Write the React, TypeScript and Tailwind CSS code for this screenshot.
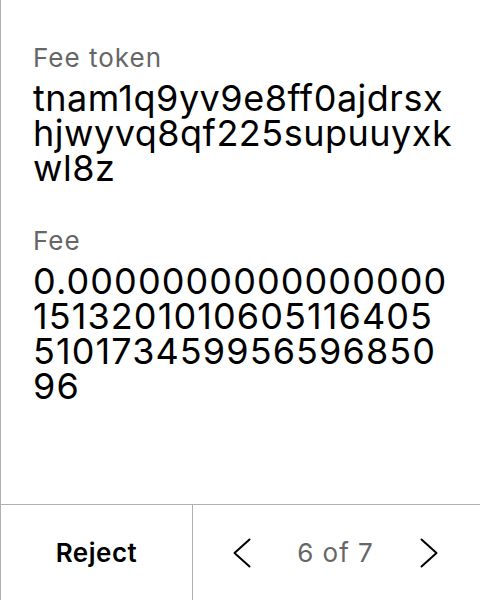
import React from 'react'

const font = { fontFamily: 'Inter, "Noto Sans", sans-serif' }

function Chevron({ dir }: { dir: 'left' | 'right' }) {
  return (
    <svg width="18" height="30" viewBox="0 0 18 30" fill="none" stroke="black" strokeWidth="2" strokeLinecap="round" strokeLinejoin="round">
      {dir === 'left' ? <polyline points="16.5,1.5 1.5,15 16.5,28.5" /> : <polyline points="1.5,1.5 16.5,15 1.5,28.5" />}
    </svg>
  )
}

export default function App() {
  return (
    <div className="w-[480px] h-[600px] flex flex-col bg-white border-l border-[#b0b0b0]" style={font}>
      {/* Details */}
      <div className="flex-1 flex flex-col gap-[40px] pl-[32px] pt-[43px]">
        <div className="flex flex-col">
          <span className="text-[26px] leading-[30px] tracking-[1px] text-[#666666]">Fee token</span>
          <span className="mt-[8px] w-[424px] text-[36px] leading-[35px] tracking-[0.5px] text-black break-all">
            tnam1q9yv9e8ff0ajdrsxhjwyvq8qf225supuuyxkwl8z
          </span>
        </div>
        <div className="flex flex-col">
          <span className="text-[26px] leading-[30px] tracking-[1px] text-[#666666]">Fee</span>
          <span className="mt-[8px] w-[418px] text-[36px] leading-[35px] tracking-[1.1px] text-black break-all">
            0.0000000000000000151320101060511640551017345995659685096
          </span>
        </div>
      </div>

      {/* Footer */}
      <div className="h-[96px] flex border-t border-[#b0b0b0]">
        <button className="w-[192px] border-r border-[#b0b0b0] flex items-center justify-center text-[26px] font-semibold tracking-[0.5px] text-black">
          Reject
        </button>
        <div className="flex-1 flex items-center justify-between pl-[40px] pr-[42px]">
          <button>
            <Chevron dir="left" />
          </button>
          <span className="text-[26px] tracking-[1px] text-[#666666]">6 of 7</span>
          <button>
            <Chevron dir="right" />
          </button>
        </div>
      </div>
    </div>
  )
}
